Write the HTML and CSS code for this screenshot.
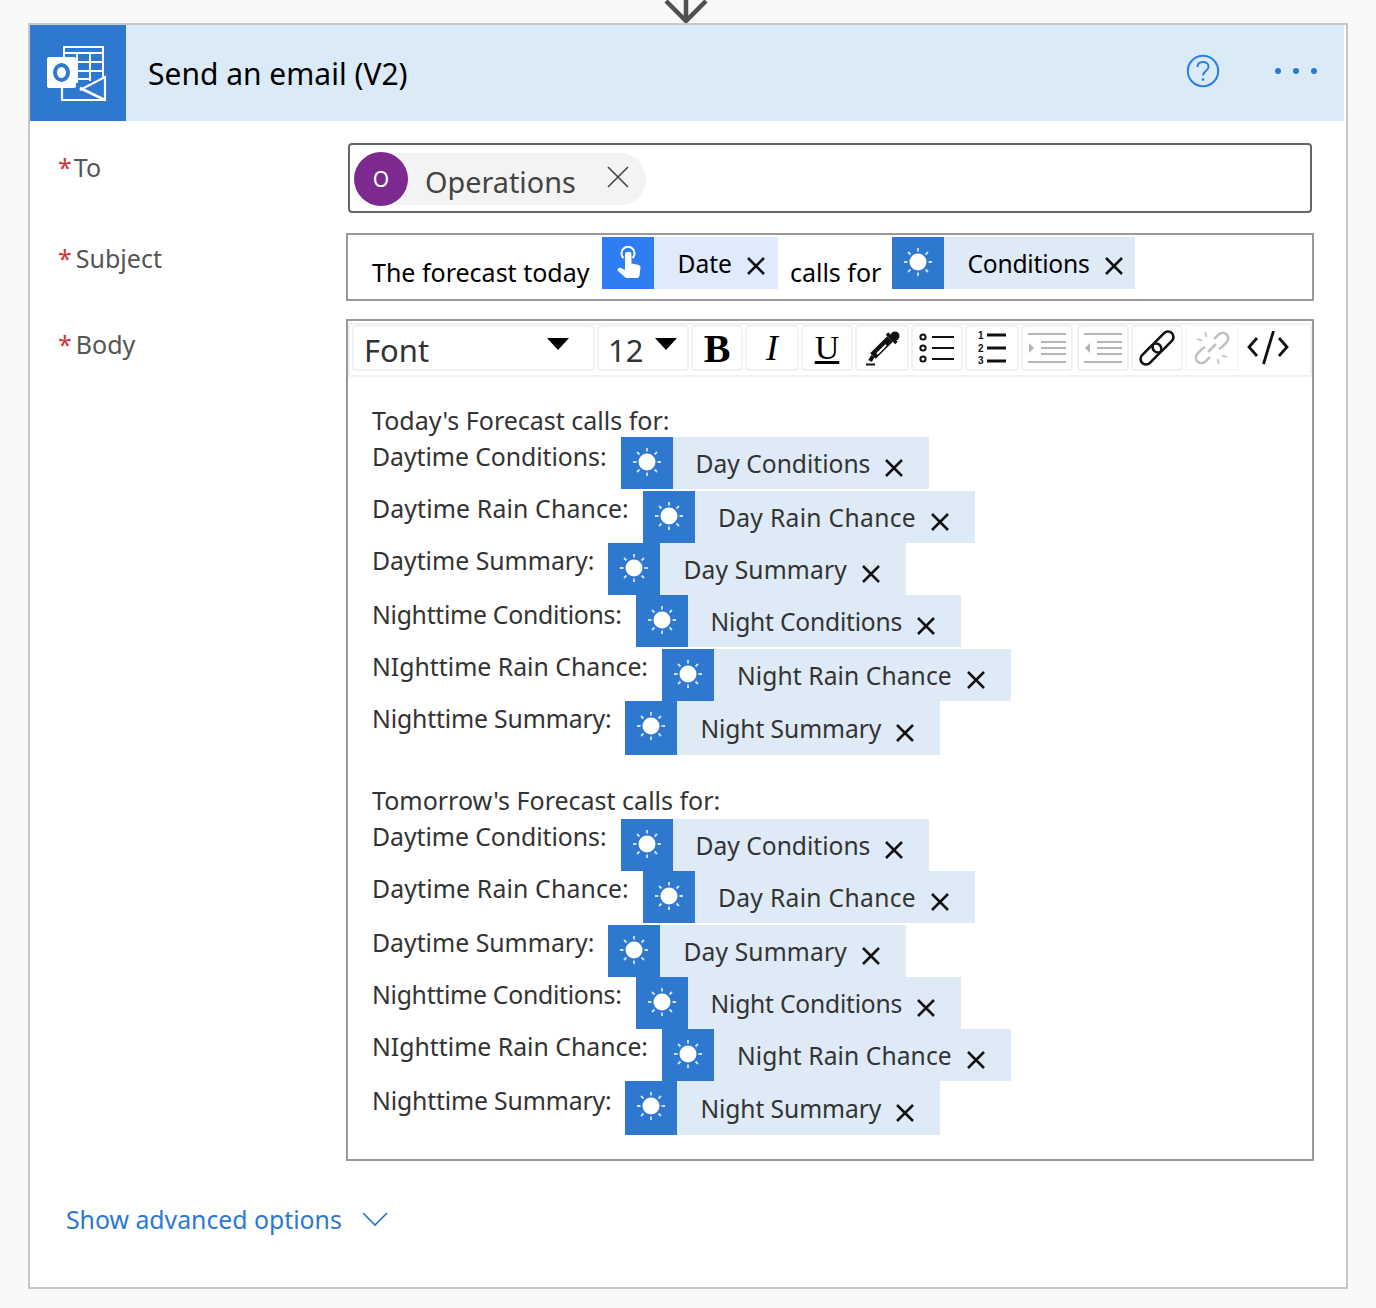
FILE: index.html
```html
<!DOCTYPE html>
<html lang="en">
<head>
  <meta charset="UTF-8">
  <title>Send an email (V2)</title>
  <link rel="stylesheet" href="styles.css">
</head>
<body>

<svg class="defs" width="0" height="0">
  <symbol id="sun" viewBox="0 0 52 52">
    <circle cx="26" cy="25" r="8.500" fill="#fff"/>
    <path d="M26 11v3.500M26 35.500v3.500M12 25h3.500M36.500 25h3.500M16 15l2.500 2.500M33.500 32.500l2.500 2.500M36 15l-2.500 2.500M18.500 32.500l-2.500 2.500" stroke="#cfe2f6" stroke-width="1.800" fill="none"/>
  </symbol>
  <symbol id="close" viewBox="0 0 18 18">
    <path d="M1 1l16 16M17 1L1 17" stroke="#111" stroke-width="2.500" fill="none"/>
  </symbol>
</svg>

<div class="connector">
  <svg width="46" height="23" viewBox="0 0 46 23"><path d="M23 0v19M3 1l20 20L43 1" stroke="#505050" stroke-width="4.500" fill="none"/></svg>
</div>

<main class="card">
  <header class="card-head">
    <div class="brand">
      <svg width="96" height="96" viewBox="0 0 96 96">
        <path d="M34 33V22h39v30M34 28h39M47 28v30M60 28v28M34 37h39M34 46h39M47 54h13" stroke="#fff" stroke-width="2" fill="none"/>
        <rect x="17" y="32" width="29" height="31" rx="2" fill="#fff"/>
        <ellipse cx="31.500" cy="47.500" rx="6.500" ry="7.500" stroke="#2e78cf" stroke-width="4" fill="none"/>
        <path d="M32 63v12h43V52L50 65" stroke="#fff" stroke-width="2.200" fill="none"/>
        <path d="M50 63l25 12" stroke="#fff" stroke-width="2.600" fill="none"/>
      </svg>
    </div>
    <h1 class="card-title">Send an email (V2)</h1>
    <svg class="help" width="34" height="34" viewBox="0 0 34 34">
      <circle cx="17" cy="17" r="15.200" stroke="#2b7cf0" stroke-width="2" fill="none"/>
      <path d="M11.500 13c0-3.200 2.400-5 5.500-5s5.500 1.800 5.500 4.700c0 4.300-5.500 4.300-5.500 8.800" stroke="#2b7cf0" stroke-width="2" fill="none"/>
      <circle cx="17" cy="25.500" r="1.300" fill="#2b7cf0"/>
    </svg>
    <div class="more"><span></span><span></span><span></span></div>
  </header>

  <form class="form">
    <div class="row row-to">
      <label class="label"><span class="req">*</span>To</label>
      <div class="field-to">
        <div class="person">
          <span class="avatar">O</span>
          <span class="person-name">Operations</span>
          <svg class="person-x" width="22" height="22" viewBox="0 0 22 22"><path d="M1 1l20 20M21 1L1 21" stroke="#444" stroke-width="1.600" fill="none"/></svg>
        </div>
      </div>
    </div>

    <div class="row row-subject">
      <label class="label"><span class="req req-big">*</span>Subject</label>
      <div class="field-subject">
        <span class="subject-text">The forecast today</span>
        <span class="token token-date">
          <span class="token-icon token-icon-hand">
            <svg width="52" height="52" viewBox="0 0 52 52">
              <path d="M21.500 21a6.500 6.500 0 1 1 9 0" stroke="#fff" stroke-width="2" fill="none"/>
              <path d="M23 18a3.200 3.200 0 0 1 6.500 0v8.500l6.500 1.300c1.500.3 2.500 1.200 2.500 3l-1 7.500c0 1-.7 2.700-2.500 2.700H25c-1 0-1.700-.3-2.300-1l-6.700-6c-1.500-1.500.5-4 3-3l4 2z" fill="#fff"/>
            </svg>
          </span>
          <span class="token-text">Date</span>
          <svg class="token-x"><use href="#close"/></svg>
        </span>
        <span class="subject-text subject-mid">calls for</span>
        <span class="token token-cond">
          <span class="token-icon"><svg width="52" height="52"><use href="#sun"/></svg></span>
          <span class="token-text">Conditions</span>
          <svg class="token-x"><use href="#close"/></svg>
        </span>
      </div>
    </div>

    <div class="row row-body">
      <label class="label"><span class="req req-big">*</span>Body</label>
      <div class="field-body">
        <div class="toolbar">
          <div class="tool tool-font"><span>Font</span><i class="caret"></i></div>
          <div class="tool tool-size"><span>12</span><i class="caret"></i></div>
          <div class="tool tool-b">B</div>
          <div class="tool tool-wide tool-i">I</div>
          <div class="tool tool-u">U</div>
          <div class="tool tool-wide">
            <svg width="36" height="38" viewBox="0 0 36 38">
              <path d="M9 27L26 10" stroke="#111" stroke-width="8" fill="none"/>
              <path d="M9 27l-3 5" stroke="#111" stroke-width="4" fill="none"/>
              <circle cx="31" cy="7" r="4.500" fill="#111"/>
              <path d="M23 4.500l9.500 9.500" stroke="#111" stroke-width="3.500" fill="none"/>
              <path d="M13 25l9-9" stroke="#fff" stroke-width="2" fill="none"/>
              <path d="M2 35.500h9" stroke="#111" stroke-width="2" fill="none"/>
            </svg>
          </div>
          <div class="tool">
            <svg width="36" height="34" viewBox="0 0 36 34">
              <g fill="none" stroke="#111" stroke-width="2"><circle cx="4" cy="6" r="2.600"/><circle cx="4" cy="17" r="2.600"/><circle cx="4" cy="28" r="2.600"/></g>
              <path d="M13 6h22M13 17h22M13 28h22" stroke="#111" stroke-width="2"/>
            </svg>
          </div>
          <div class="tool tool-wide">
            <svg width="30" height="34" viewBox="0 0 30 34">
              <text class="num" x="1" y="8">1</text>
              <text class="num" x="1" y="21">2</text>
              <text class="num" x="1" y="33">3</text>
              <path d="M10 4h19M10 17h19M10 30h19" stroke="#111" stroke-width="3.200"/>
            </svg>
          </div>
          <div class="tool">
            <svg width="38" height="32" viewBox="0 0 38 32"><path d="M0 2h38M13 10h25M13 16h25M13 22h25M0 30h38" stroke="#b4b4b4" stroke-width="2"/><path d="M1 11l5 5-5 5z" fill="#b4b4b4"/></svg>
          </div>
          <div class="tool tool-out">
            <svg width="38" height="32" viewBox="0 0 38 32"><path d="M0 2h38M13 10h25M13 16h25M13 22h25M0 30h38" stroke="#b4b4b4" stroke-width="2"/><path d="M6 11l-5 5 5 5z" fill="#b4b4b4"/></svg>
          </div>
          <div class="tool">
            <svg width="36" height="36" viewBox="0 0 36 36"><g fill="none" stroke="#111" stroke-width="2.600" transform="rotate(-45 18 18)"><rect x="-3" y="12.500" width="25" height="11" rx="5.500"/><rect x="14" y="12.500" width="25" height="11" rx="5.500"/></g></svg>
          </div>
          <div class="tool tool-wide tool-off">
            <svg width="36" height="36" viewBox="0 0 36 36"><g fill="none" stroke="#c2c2c2" stroke-width="2.600"><path d="M20 9l4-4c3-3 6.500-2.500 8.500-.5s2.500 5.500-.5 8.500l-4 4-3 2"/><path d="M16 27l-4 4c-3 3-6.500 2.500-8.500.5S1 26 4 23l4-4 3-2"/><path d="M14 22l8-8"/><path d="M11 2l1.500 5M3 9l5 1.500M25 34l-1.500-5M33 27l-5-1.500" stroke-width="1.800"/></g></svg>
          </div>
          <div class="tool tool-wide tool-code">
            <svg width="42" height="34" viewBox="0 0 42 34"><path d="M10 7l-8 9 8 9M32 7l8 9-8 9M26.500 0l-10 33" stroke="#111" stroke-width="2.800" fill="none"/></svg>
          </div>
        </div>

        <div class="editor">
          <section class="block">
            <p class="heading">Today's Forecast calls for:</p>
            <div class="line line-dc line-tall line-low"><span class="line-text">Daytime Conditions:</span><span class="token token-a"><span class="token-icon"><svg width="52" height="52"><use href="#sun"/></svg></span><span class="token-text">Day Conditions</span><svg class="token-x"><use href="#close"/></svg></span></div>
            <div class="line line-dr"><span class="line-text">Daytime Rain Chance:</span><span class="token token-a"><span class="token-icon"><svg width="52" height="52"><use href="#sun"/></svg></span><span class="token-text">Day Rain Chance</span><svg class="token-x"><use href="#close"/></svg></span></div>
            <div class="line line-ds"><span class="line-text">Daytime Summary:</span><span class="token token-a"><span class="token-icon"><svg width="52" height="52"><use href="#sun"/></svg></span><span class="token-text">Day Summary</span><svg class="token-x"><use href="#close"/></svg></span></div>
            <div class="line line-nc line-tall line-low"><span class="line-text">Nighttime Conditions:</span><span class="token token-a"><span class="token-icon"><svg width="52" height="52"><use href="#sun"/></svg></span><span class="token-text">Night Conditions</span><svg class="token-x"><use href="#close"/></svg></span></div>
            <div class="line line-nr"><span class="line-text">NIghttime Rain Chance:</span><span class="token token-a"><span class="token-icon"><svg width="52" height="52"><use href="#sun"/></svg></span><span class="token-text">Night Rain Chance</span><svg class="token-x"><use href="#close"/></svg></span></div>
            <div class="line line-ns line-tall"><span class="line-text">Nighttime Summary:</span><span class="token token-a"><span class="token-icon"><svg width="52" height="52"><use href="#sun"/></svg></span><span class="token-text">Night Summary</span><svg class="token-x"><use href="#close"/></svg></span></div>
          </section>

          <section class="block block-two">
            <p class="heading">Tomorrow's Forecast calls for:</p>
            <div class="line line-dc"><span class="line-text">Daytime Conditions:</span><span class="token token-a"><span class="token-icon"><svg width="52" height="52"><use href="#sun"/></svg></span><span class="token-text">Day Conditions</span><svg class="token-x"><use href="#close"/></svg></span></div>
            <div class="line line-dr line-tall"><span class="line-text">Daytime Rain Chance:</span><span class="token token-a"><span class="token-icon"><svg width="52" height="52"><use href="#sun"/></svg></span><span class="token-text">Day Rain Chance</span><svg class="token-x"><use href="#close"/></svg></span></div>
            <div class="line line-ds"><span class="line-text">Daytime Summary:</span><span class="token token-a"><span class="token-icon"><svg width="52" height="52"><use href="#sun"/></svg></span><span class="token-text">Day Summary</span><svg class="token-x"><use href="#close"/></svg></span></div>
            <div class="line line-nc"><span class="line-text">Nighttime Conditions:</span><span class="token token-a"><span class="token-icon"><svg width="52" height="52"><use href="#sun"/></svg></span><span class="token-text">Night Conditions</span><svg class="token-x"><use href="#close"/></svg></span></div>
            <div class="line line-nr"><span class="line-text">NIghttime Rain Chance:</span><span class="token token-a"><span class="token-icon"><svg width="52" height="52"><use href="#sun"/></svg></span><span class="token-text">Night Rain Chance</span><svg class="token-x"><use href="#close"/></svg></span></div>
            <div class="line line-ns line-tall line-low"><span class="line-text">Nighttime Summary:</span><span class="token token-a"><span class="token-icon"><svg width="52" height="52"><use href="#sun"/></svg></span><span class="token-text">Night Summary</span><svg class="token-x"><use href="#close"/></svg></span></div>
          </section>
        </div>
      </div>
    </div>

    <div class="advanced">
      <span class="advanced-text">Show advanced options</span>
      <svg width="26" height="16" viewBox="0 0 26 16"><path d="M1 2l12 12L25 2" stroke="#2b6fd6" stroke-width="1.600" fill="none"/></svg>
    </div>
  </form>
</main>

</body>
</html>
```

FILE: styles.css
```css
body {
  margin: 0;
  background: #f8f8f8;
  font-family: "Noto Sans", sans-serif;
  color: #333;
}

.defs {
  display: block;
  height: 0;
}

.connector {
  height: 23px;
  display: flex;
  justify-content: center;
  padding-right: 4px;
}

.card {
  margin-left: 28px;
  width: 1316px;
  border: 2px solid #c8c8c8;
  background: #fff;
}

.card-head {
  display: flex;
  align-items: center;
  height: 96px;
  width: 1314px;
  background: #dbeaf7;
}

.brand {
  width: 96px;
  height: 96px;
  background: #2e78cf;
}

.card-title {
  margin: 0 0 0 22px;
  flex: 1;
  font-size: 30px;
  font-weight: 400;
  color: #000;
}

.help {
  margin: 0 55px 4px 0;
}

.more {
  display: flex;
  gap: 12px;
  margin: 0 27px 0 0;
  padding-bottom: 4px;
}

.more span {
  width: 6px;
  height: 6px;
  border-radius: 50%;
  background: #2b78d6;
}

.form {
  padding: 22px 32px 0 0;
}

.row {
  display: flex;
}

.label {
  width: 316px;
  padding-left: 28px;
  box-sizing: border-box;
  font-size: 25px;
  color: #555;
  line-height: 34px;
  flex: none;
}

.req {
  color: #d13438;
  margin-right: 2px;
}

.req-big {
  margin-right: 4px;
}

.row-to .label {
  padding-top: 7px;
}

.field-to {
  margin: 0 2px;
  width: 964px;
  height: 70px;
  box-sizing: border-box;
  border: 2px solid #666;
  border-radius: 4px;
  padding: 8px 4px;
}

.person {
  display: inline-flex;
  align-items: center;
  height: 52px;
  width: 292px;
  background: #f3f3f3;
  border-radius: 27px;
}

.avatar {
  width: 54px;
  height: 54px;
  border-radius: 50%;
  background: #7c2a90;
  color: #fff;
  font-size: 21px;
  display: flex;
  align-items: center;
  justify-content: center;
  flex: none;
}

.person-name {
  margin: 4px 0 0 17px;
  font-size: 28.800px;
  color: #444;
  width: 182px;
  flex: none;
}

.person-x {
  margin-bottom: 4px;
}

.row-subject {
  margin-top: 20px;
}

.row-subject .label {
  padding-top: 8px;
}

.field-subject {
  width: 968px;
  height: 68px;
  box-sizing: border-box;
  border: 2px solid #999;
  padding: 2px 0 0 24px;
  display: flex;
}

.subject-text {
  font-size: 25px;
  color: #000;
  margin: 17px 13px 0 0;
  line-height: 36px;
  white-space: nowrap;
}

.subject-mid {
  margin-right: 11px;
}

.row-body {
  margin-top: 18px;
}

.row-body .label {
  padding-top: 8px;
}

.field-body {
  width: 968px;
  height: 842px;
  box-sizing: border-box;
  border: 2px solid #999;
  padding-top: 2px;
}

.toolbar {
  display: flex;
  gap: 2px;
  height: 54px;
  box-sizing: border-box;
  border: 2px solid #f1f1f1;
  border-radius: 3px;
  padding-left: 2px;
}

.tool {
  width: 52px;
  height: 46px;
  box-sizing: border-box;
  border: 2px solid #f1f1f1;
  border-radius: 4px;
  display: flex;
  align-items: center;
  justify-content: center;
  flex: none;
}

.tool-wide {
  width: 54px;
}

.tool-font,
.tool-size {
  justify-content: space-between;
  font-size: 31px;
  color: #333;
  padding: 4px 24px 0 10px;
}

.tool-font {
  width: 243px;
}

.tool-size {
  width: 92px;
  padding: 4px 10px 0 9px;
}

.caret {
  width: 0;
  height: 0;
  border-left: 11px solid transparent;
  border-right: 11px solid transparent;
  border-top: 12px solid #000;
  margin-bottom: 12px;
}

.tool-b,
.tool-i,
.tool-u {
  font-family: "Liberation Serif", serif;
  font-size: 40px;
  color: #000;
}

.tool-b {
  font-weight: 700;
}

.tool-i {
  font-style: italic;
  font-size: 36px;
}

.tool-u {
  text-decoration: underline;
  font-size: 34px;
}

.tool-out {
  margin-left: 2px;
}

.tool-off {
  border-color: #f8f8f8;
}

.tool-code {
  border: 0;
}

.num {
  font-family: "Liberation Sans", sans-serif;
  font-size: 10px;
  font-weight: 700;
  fill: #111;
}

.editor {
  padding: 26px 0 0 24px;
}

.heading {
  margin: 0;
  height: 34px;
  font-size: 25px;
  line-height: 34px;
  color: #333;
}

.block-two {
  margin-top: 28px;
}

.block-two .heading {
  height: 36px;
}

.line {
  display: flex;
  height: 52px;
}

.line-tall {
  height: 54px;
}

.line-text {
  font-size: 24.800px;
  line-height: 34px;
  color: #333;
  margin-right: 14px;
  white-space: nowrap;
}

.line-low .line-text {
  padding-top: 2px;
}

/* Noto runs a little off the reference's widths, nudged per label */
.line-dc .line-text {
  letter-spacing: -0.05px;
}

.line-dr .line-text {
  letter-spacing: 0.15px;
}

.line-nc .line-text {
  letter-spacing: -0.29px;
}

.line-ns .line-text {
  letter-spacing: -0.17px;
}

.line-dr .token-text {
  letter-spacing: 0.33px;
}

.line-ds .token-text {
  letter-spacing: 0.15px;
}

.line-nc .token-text {
  letter-spacing: -0.2px;
}

.line-nr .token-text {
  letter-spacing: 0.1px;
}

.line-ns .token-text {
  letter-spacing: -0.08px;
}

.line-ns .token {
  height: 54px;
}

.token {
  display: inline-flex;
  align-items: center;
  height: 52px;
  background: #deeaf6;
  flex: none;
}

.token-icon {
  width: 52px;
  height: 100%;
  background: #2e78cf;
  flex: none;
}

.token-icon svg {
  display: block;
}

.token-icon-hand {
  background: #2f7df2;
}

.token-text {
  font-size: 24.600px;
  margin: 1px 0 0 23px;
  white-space: nowrap;
}

.token-x {
  width: 18px;
  height: 18px;
  margin-left: 15px;
}

.token-a {
  padding-right: 26px;
}

.token-a .token-x {
  margin-top: 10px;
}

.token-date,
.token-cond {
  padding-right: 12px;
  color: #000;
  margin-right: 12px;
}

.token-date {
  background: #dfeafc;
  padding-right: 13px;
}

.token-cond .token-text {
  letter-spacing: -0.2px;
}

.token-date .token-x,
.token-cond .token-x {
  margin-top: 5px;
}

.advanced {
  display: flex;
  align-items: center;
  gap: 20px;
  margin: 39px 0 0 36px;
  height: 38px;
  padding-bottom: 49px;
  color: #2b78d6;
}

.advanced-text {
  font-size: 24.800px;
}
```
